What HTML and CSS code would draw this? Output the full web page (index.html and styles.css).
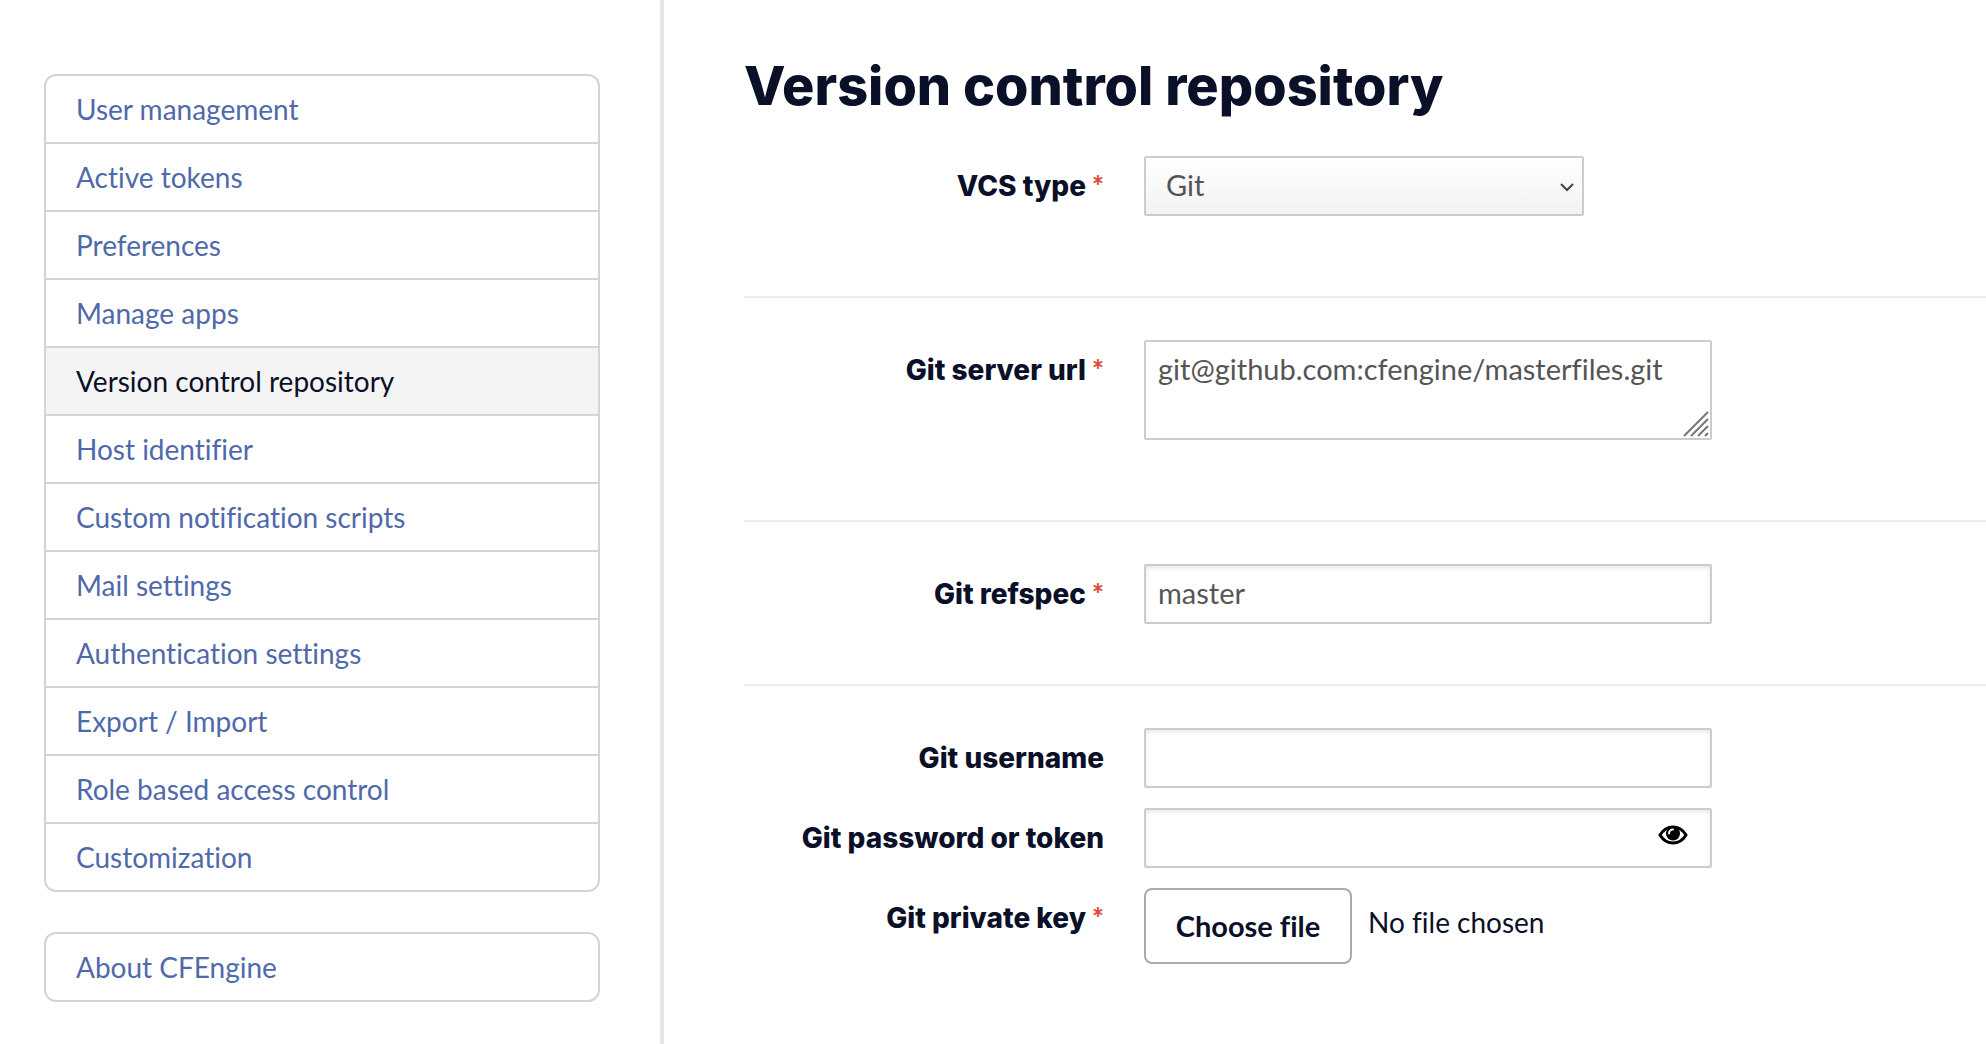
FILE: index.html
```html
<!DOCTYPE html>
<html lang="en">
<head>
<meta charset="utf-8">
<title>Version control repository</title>
<link rel="stylesheet" href="styles.css">
</head>
<body>
<div class="layout">
  <aside class="sidebar">
    <nav class="menu" aria-label="Settings">
      <a href="#users">User management</a>
      <a href="#tokens">Active tokens</a>
      <a href="#preferences">Preferences</a>
      <a href="#apps">Manage apps</a>
      <a href="#vcs" class="active" aria-current="page">Version control repository</a>
      <a href="#host">Host identifier</a>
      <a href="#notifications">Custom notification scripts</a>
      <a href="#mail">Mail settings</a>
      <a href="#auth">Authentication settings</a>
      <a href="#export">Export / Import</a>
      <a href="#rbac">Role based access control</a>
      <a href="#customization">Customization</a>
    </nav>
    <nav class="menu" aria-label="About">
      <a href="#about">About CFEngine</a>
    </nav>
  </aside>
  <main class="content">
    <h1>Version control repository</h1>
    <form>
      <section class="group">
        <div class="row">
          <label for="type">VCS type <span class="required">*</span></label>
          <div class="control control-select">
            <select id="type"><option>Git</option></select>
            <svg class="chevron" viewBox="0 0 16 10" aria-hidden="true"><path d="M2 2l6 6 6-6"/></svg>
          </div>
        </div>
      </section>
      <section class="group">
        <div class="row">
          <label for="url">Git server url <span class="required">*</span></label>
          <div class="control">
            <textarea id="url" spellcheck="false">git@github.com:cfengine/masterfiles.git</textarea>
            <svg class="grip" viewBox="0 0 26 26" aria-hidden="true"><path d="M1 25L25 1M8 25L25 8M15 25L25 15M22 25l3-3"/></svg>
          </div>
        </div>
      </section>
      <section class="group group-short">
        <div class="row">
          <label for="refspec">Git refspec <span class="required">*</span></label>
          <div class="control"><input id="refspec" type="text" value="master"></div>
        </div>
      </section>
      <section class="group">
        <div class="row">
          <label for="username">Git username</label>
          <div class="control"><input id="username" type="text"></div>
        </div>
        <div class="row">
          <label for="password">Git password or token</label>
          <div class="control">
            <input id="password" type="password">
            <button class="reveal" type="button" aria-label="Show password">
              <svg viewBox="0 0 30 20" aria-hidden="true">
                <path class="eye-line" d="M2 10C5 5 9.500 2 15 2s10 3 13 8c-3 5-7.500 8-13 8S5 15 2 10z"/>
                <circle cx="15" cy="8.500" r="7"/>
                <path class="eye-shine" d="M11 8.500a4 4 0 0 1 4-4"/>
              </svg>
            </button>
          </div>
        </div>
        <div class="row">
          <label for="key">Git private key <span class="required">*</span></label>
          <div class="control file">
            <input id="key" type="file" hidden>
            <button class="choose" type="button">Choose file</button>
            <output class="filename" for="key">No file chosen</output>
          </div>
        </div>
      </section>
    </form>
  </main>
</div>
<script src="script.js"></script>
</body>
</html>
```
FILE: styles.css
```css
* {
  box-sizing: border-box;
}

body {
  margin: 0;
  background: #fff;
  color: #0b1029;
  font: 28px/32px Lato, "Open Sans", sans-serif;
  font-variant-ligatures: none;
}

.layout {
  display: grid;
  grid-template-columns: 664px minmax(0, 1fr);
  min-height: 100vh;
}

.sidebar {
  display: flex;
  flex-direction: column;
  gap: 40px;
  padding: 74px 60px 40px 44px;
  border-right: 4px solid #e3e7ea;
}

.menu {
  border: 2px solid #d4d5d0;
  border-radius: 12px;
  overflow: hidden;
}

.menu a {
  display: block;
  padding: 17px 30px;
  color: #5069ab;
  text-decoration: none;
}

.menu a + a {
  border-top: 2px solid #d4d5d0;
}

.menu .active {
  background: #f4f4f4;
  color: #0b1029;
}

.content {
  padding: 52px 0 40px 80px;
}

h1 {
  margin: 0 0 36px;
  font-family: Inter, sans-serif;
  font-size: 54px;
  font-weight: 800;
  line-height: 68px;
}

.group {
  display: flex;
  flex-direction: column;
  gap: 20px;
  padding: 42px 0 80px;
  border-bottom: 2px solid #ececec;
}

.group:first-child {
  padding-top: 0;
}

.group-short {
  padding-bottom: 60px;
}

.group:last-child {
  padding-bottom: 0;
  border-bottom: 0;
}

.row {
  display: grid;
  grid-template-columns: 360px minmax(0, 568px);
  column-gap: 40px;
  align-items: start;
}

label {
  font-family: Inter, sans-serif;
  font-weight: 800;
  line-height: 60px;
  text-align: right;
}

.required {
  color: #dd4b39;
  font-family: Lato, sans-serif;
  font-weight: 900;
  line-height: 32px;
}

.control {
  position: relative;
  display: flex;
}

.control-select {
  max-width: 440px;
}

input,
textarea,
select {
  width: 100%;
  height: 60px;
  margin: 0;
  padding: 0 12px 4px;
  border: 2px solid #ccc;
  border-radius: 2px;
  outline: 0;
  background: #fff;
  color: #555;
  font: inherit;
  font-size: 29px;
}

input {
  box-shadow: inset 0 2px 4px rgba(0, 0, 0, 0.1);
}

textarea {
  height: 100px;
  padding: 11px 12px;
  overflow: hidden;
  resize: none;
}

select {
  padding: 0 20px 2px;
  appearance: none;
  background: linear-gradient(#fff, #f2f2f2);
}

.chevron,
.grip {
  position: absolute;
  fill: none;
  pointer-events: none;
}

.chevron {
  top: 26px;
  right: 9px;
  width: 16px;
  height: 10px;
  stroke: #444;
  stroke-width: 2;
}

.grip {
  right: 3px;
  bottom: 3px;
  width: 26px;
  height: 26px;
  stroke: #777;
  stroke-width: 2;
}

.reveal {
  position: absolute;
  top: 17px;
  right: 24px;
  display: flex;
  padding: 0;
  border: 0;
  background: none;
}

.reveal svg {
  width: 30px;
  height: 20px;
}

.eye-line {
  fill: none;
  stroke: #000;
  stroke-width: 3;
}

.eye-shine {
  fill: none;
  stroke: #fff;
  stroke-width: 2;
  stroke-linecap: round;
}

.file {
  gap: 16px;
}

.choose {
  min-width: 208px;
  padding: 20px 24px;
  border: 2px solid #aaa;
  border-radius: 8px;
  background: #fff;
  color: #0b1029;
  font: inherit;
  font-size: 29px;
  line-height: 32px;
  font-weight: 700;
}

.filename {
  line-height: 68px;
}
```
FILE: script.js
```js
const fileInput = document.getElementById("key");
document.querySelector(".choose").addEventListener("click", () => fileInput.click());
fileInput.addEventListener("change", () => {
  const file = fileInput.files[0];
  document.querySelector(".filename").textContent = file ? file.name : "No file chosen";
});
```
